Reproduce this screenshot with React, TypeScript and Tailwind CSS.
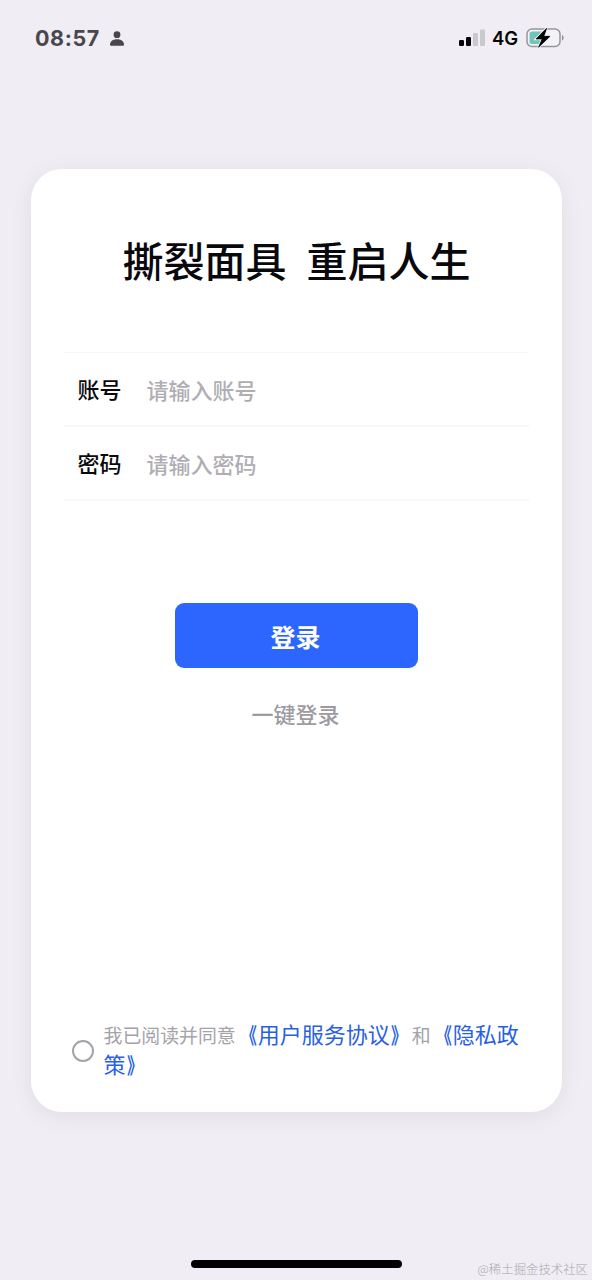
import React from "react";

function StatusBar() {
  return (
    <header className="flex h-[76px] items-center justify-between pl-[35px] pr-[27px] font-['Inter','Liberation_Sans',sans-serif]">
      <div className="flex items-center text-[#48474c]">
        <span className="w-[65px] whitespace-nowrap text-[21.5px] leading-[30px] font-bold tracking-[0.6px]">08:57</span>
        <svg className="ml-[10px] h-[15px] w-[14px]" viewBox="0 0 14 15" fill="currentColor">
          <circle cx="7" cy="3.7" r="3.4" />
          <path d="M0 13.6C0 10.4 2.8 8.2 7 8.2s7 2.2 7 5.4c0 .9-.4 1.2-1.2 1.2H1.2C.4 14.800 0 14.500 0 13.600Z" />
        </svg>
      </div>
      <div className="flex items-center">
        <svg className="h-[18px] w-[27px]" viewBox="0 0 27 18">
          <rect x="0" y="11" width="5" height="6" rx="1.2" fill="#050505" />
          <rect x="7" y="8" width="5" height="9" rx="1.2" fill="#050505" />
          <rect x="14" y="4" width="5" height="13" rx="1.2" fill="#c9c8cc" />
          <rect x="21" y="0.500" width="5" height="16.500" rx="1.2" fill="#c9c8cc" />
        </svg>
        <span className="ml-[6px] w-[28px] whitespace-nowrap text-[18.5px] leading-[30px] font-semibold text-[#050505]">4G</span>
        <svg className="ml-[6px] h-[22px] w-[39px]" viewBox="0 0 39 22">
          <rect x="1" y="2" width="33" height="17.500" rx="5" fill="#f3f2f6" stroke="#97969b" strokeWidth="1.5" />
          <path d="M6 4.500h10v12.500H6a2.500 2.500 0 0 1-2.500-2.500V7A2.500 2.500 0 0 1 6 4.500Z" fill="#70c4bb" />
          <path d="M36 8c2 .8 2 4.800 0 5.600Z" fill="#8b8a8f" />
          <path d="M20.700 1.200 10 12h6.200L12.600 20.200 24 9.300h-6.200Z" fill="#050505" stroke="#f0eff4" strokeWidth="2.400" paintOrder="stroke" />
          <path d="M20.700 1.200 10 12h6.200L12.600 20.200 24 9.300h-6.200Z" fill="#050505" stroke="#050505" strokeWidth="0.600" strokeLinejoin="round" />
        </svg>
      </div>
    </header>
  );
}

function Field({ label, placeholder, type }: { label: string; placeholder: string; type: string }) {
  return (
    <label className="flex h-[74px] items-center border-b-2 border-[#f7f6fa] pl-[13.500px] text-[22px]">
      <span className="w-[69px] shrink-0 font-medium text-[#09080d]">{label}</span>
      <input
        type={type}
        placeholder={placeholder}
        className="min-w-0 flex-1 bg-transparent pt-px font-medium outline-none placeholder:text-[#b0aeb4]"
      />
    </label>
  );
}

function DocumentLink({ title }: { title: string }) {
  return (
    <a className="text-[22px] leading-[20px] text-[#285fe5]">
      <span className="inline-block w-[22px] origin-[82%_50%] scale-x-[0.72] font-bold">《</span>
      {title}
      <span className="inline-block w-[22px] origin-[18%_50%] scale-x-[0.72] font-bold">》</span>
    </a>
  );
}

export default function App() {
  return (
    <div className="flex h-[1280px] w-[592px] flex-col overflow-hidden bg-[#f0eef4] font-['Noto_Sans_CJK_SC',sans-serif]">
      <StatusBar />
      <main className="mt-[92.500px] ml-[31px] flex h-[943px] w-[531px] shrink-0 flex-col rounded-[31px] bg-white px-[33px] shadow-[0_4px_22px_rgba(0,0,0,0.07)]">
        <h1 className="mt-[61px] flex h-[60px] items-center justify-center gap-[20px] text-[41px] font-medium text-[#09080d]">
          <span>撕裂面具</span>
          <span>重启人生</span>
        </h1>
        <form className="mt-[62px] border-t border-[#f8f7fb]">
          <Field label="账号" placeholder="请输入账号" type="text" />
          <Field label="密码" placeholder="请输入密码" type="password" />
        </form>
        <div className="mt-[102px] flex flex-col items-center">
          <button className="h-[65px] w-[243px] rounded-[9px] bg-[#2d66ff] pt-[3px] pr-[2px] text-[25px] font-bold text-white">登录</button>
          <button className="mt-[28px] h-[34px] pr-[2px] text-[22px] leading-[34px] font-medium text-[#9d9ba1]">一键登录</button>
        </div>
        <div className="mt-auto mb-[32px] flex items-center pl-[8px]">
          <span className="mt-[2px] h-[22px] w-[22px] shrink-0 rounded-full border-2 border-[#a5a3a9]" />
          <p className="ml-[9.500px] w-[420px] text-[18.900px] leading-[30px] text-[#a5a3a9]">
            我已阅读并同意<DocumentLink title="用户服务协议" />和<DocumentLink title="隐私政策" />
          </p>
        </div>
      </main>
      <footer className="relative mt-auto h-[20px] shrink-0">
        <div className="mx-auto h-[8px] w-[211px] rounded-full bg-black" />
        <span className="absolute right-[4px] bottom-[2px] whitespace-nowrap text-[12.400px] leading-[18px] font-light text-[#aaa8ad]">@稀土掘金技术社区</span>
      </footer>
    </div>
  );
}
